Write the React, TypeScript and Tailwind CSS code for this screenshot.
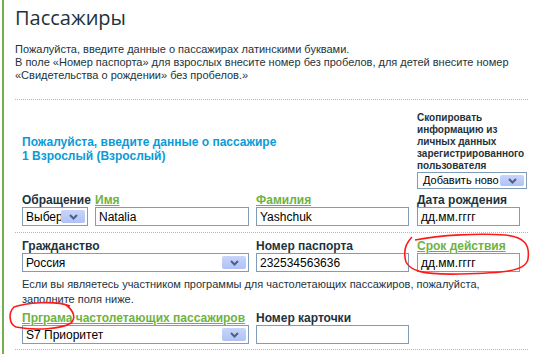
import React from "react";

const Arrow = () => (
  <div className="absolute right-[2px] top-[2px] bottom-[2px] w-[24px] bg-gradient-to-b from-[#c8d5fc] to-[#b0c1f5] flex items-center justify-center rounded-[2px]">
    <svg width="9" height="6" viewBox="0 0 9 6">
      <path d="M1 1 L4.5 4.5 L8 1" stroke="#4d6185" strokeWidth="2" fill="none" />
    </svg>
  </div>
);

const Select = ({ value, w, h = "h-[19px]", pad = "pl-[3px]", size = "text-[12px]" }: { value: string; w: string; h?: string; pad?: string; size?: string }) => (
  <div className={`relative ${h} ${w} ${pad} ${size} border border-[#7f9db9] bg-white flex items-center text-black overflow-hidden whitespace-nowrap`}>
    {value}
    <Arrow />
  </div>
);

const Input = ({ value, w }: { value: string; w: string }) => (
  <div className={`h-[19px] ${w} border border-[#7f9db9] bg-white flex items-center pl-[3px] text-[12px] text-black`}>
    {value}
  </div>
);

const Label = ({ children, green }: { children: React.ReactNode; green?: boolean }) =>
  green ? (
    <div className="text-[12px] font-bold leading-[13px] text-[#6db33f] underline underline-offset-[1px] whitespace-nowrap">{children}</div>
  ) : (
    <div className="text-[12px] font-bold leading-[13px] text-[#1e333d] whitespace-nowrap">{children}</div>
  );

const Dots = () => <div className="border-t border-dotted border-[#b5b5b5] w-[513px]" />;

export default function App() {
  return (
    <div className="relative w-[543px] h-[354px] bg-white overflow-hidden text-[#1e333d]" style={{ fontFamily: '"Liberation Sans", Arial, sans-serif' }}>
      <div className="absolute left-[2px] top-0 bottom-0 w-[2px] bg-[#76b04e]" />
      <div className="pl-[15px]">
        <h1 className="pt-[4px] text-[20px] leading-[28px] text-[#1e333d]" style={{ fontFamily: '"Open Sans", sans-serif' }}>Пассажиры</h1>
        <div className="mt-[11px] text-[11px] leading-[13px] text-[#1e333d]">
          <div>Пожалуйста, введите данные о пассажирах латинскими буквами.</div>
          <div>В поле «Номер паспорта» для взрослых внесите номер без пробелов, для детей внесите номер</div>
          <div>«Свидетельства о рождении» без пробелов.»</div>
        </div>
        <div className="mt-[17px]"><Dots /></div>

        <div className="pl-[7px]">
          <div className="flex mt-[12px]">
            <div className="w-[395px] pt-[23px] text-[12px] font-bold leading-[14px] text-[#0a9ad8]">
              <div>Пожалуйста, введите данные о пассажире</div>
              <div>1 Взрослый (Взрослый)</div>
            </div>
            <div>
              <div className="text-[10px] font-bold leading-[12px] text-[#1e333d]">
                <div>Скопировать</div>
                <div>информацию из</div>
                <div>личных данных</div>
                <div>зарегистрированного</div>
                <div>пользователя</div>
              </div>
              <Select value="Добавить ново" w="w-[110px]" h="h-[17px]" pad="pl-[5px]" size="text-[11px]" />
            </div>
          </div>

          <div className="flex gap-[7px] mt-[5px]">
            <div className="w-[66px]"><Label>Обращение</Label><Select value="Выбери" w="w-[66px]" /></div>
            <div className="w-[154px]"><Label green>Имя</Label><Input value="Natalia" w="w-[154px]" /></div>
            <div className="w-[153px]"><Label green>Фамилия</Label><Input value="Yashchuk" w="w-[153px]" /></div>
            <div className="ml-[1px]"><Label>Дата рождения</Label><Input value="дд.мм.гггг" w="w-[103px]" /></div>
          </div>
        </div>
        <div className="mt-[6px]"><Dots /></div>

        <div className="pl-[7px]">
          <div className="flex gap-[7px] mt-[7px]">
            <div className="w-[227px]"><Label>Гражданство</Label><Select value="Россия" w="w-[227px]" /></div>
            <div className="w-[153px]"><Label>Номер паспорта</Label><Input value="232534563636" w="w-[153px]" /></div>
            <div className="ml-[1px]"><Label green>Срок действия</Label><Input value="дд.мм.гггг" w="w-[103px]" /></div>
          </div>
          <div className="mt-[5px] text-[11px] leading-[15px] text-[#1e333d]">
            <div>Если вы являетесь участником программы для частолетающих пассажиров, пожалуйста,</div>
            <div>заполните поля ниже.</div>
          </div>
          <div className="flex gap-[7px] mt-[5px]">
            <div className="w-[227px]"><Label green>Прграма частолетающих пассажиров</Label><Select value="S7 Приоритет" w="w-[227px]" /></div>
            <div className="w-[153px]"><Label>Номер карточки</Label><Input value="" w="w-[153px]" /></div>
          </div>
        </div>
        <div className="mt-[5px]"><Dots /></div>
      </div>

      <svg className="absolute left-0 top-0 pointer-events-none" width="543" height="354">
        <path d="M70 306 C55 300 25 303 14 307 C8 313 9 324 16 327 C35 331 62 329 71 323 C76 318 74 311 66 305" stroke="#ff1a1a" strokeWidth="1.6" fill="none" />
        <path d="M415 240 C440 235 480 233 505 235 C525 237 530 245 528 259 C526 272 500 273 460 274 C420 275 410 270 406 262 C403 252 405 244 412 237" stroke="#ff1a1a" strokeWidth="1.6" fill="none" />
      </svg>
    </div>
  );
}
